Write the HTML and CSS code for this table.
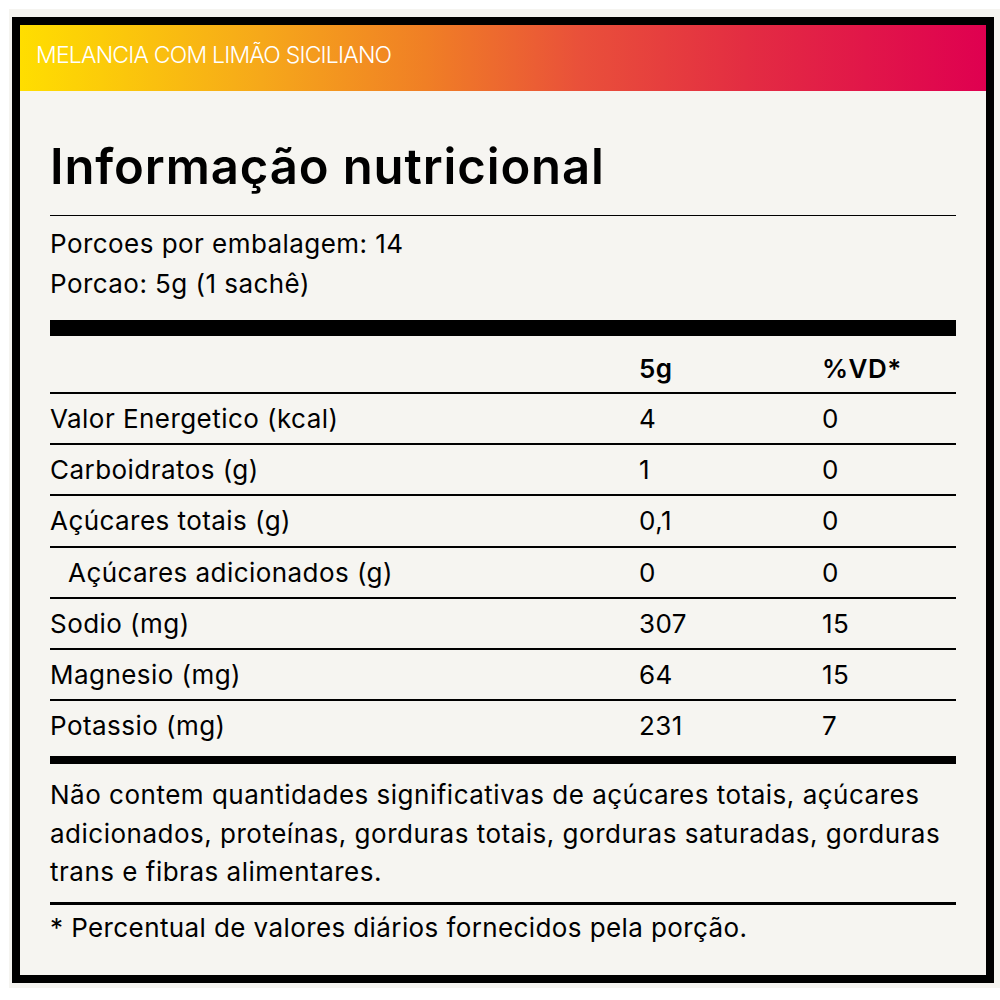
FILE: index.html
```html
<!DOCTYPE html>
<html lang="pt-BR">
<head>
<meta charset="utf-8">
<title>Informação nutricional</title>
<link rel="stylesheet" href="styles.css">
</head>
<body>
<div class="frame">
  <section class="label">
    <header class="flavor"><span class="flavor-name">MELANCIA COM LIMÃO SICILIANO</span></header>
    <div class="content">
      <h1 class="title">Informação nutricional</h1>
      <div class="serving">
        <p>Porcoes por embalagem: 14</p>
        <p>Porcao: 5g (1 sachê)</p>
      </div>
      <div class="bar-thick"></div>
      <div class="table">
        <div class="row head"><span></span><span>5g</span><span>%VD*</span></div>
        <div class="row"><span>Valor Energetico (kcal)</span><span>4</span><span>0</span></div>
        <div class="row"><span>Carboidratos (g)</span><span>1</span><span>0</span></div>
        <div class="row"><span>Açúcares totais (g)</span><span>0,1</span><span>0</span></div>
        <div class="row"><span class="indent">Açúcares adicionados (g)</span><span>0</span><span>0</span></div>
        <div class="row"><span>Sodio (mg)</span><span>307</span><span>15</span></div>
        <div class="row"><span>Magnesio (mg)</span><span>64</span><span>15</span></div>
        <div class="row"><span>Potassio (mg)</span><span>231</span><span>7</span></div>
      </div>
      <div class="bar-mid"></div>
      <p class="note">Não contem quantidades significativas de açúcares totais, açúcares adicionados, proteínas, gorduras totais, gorduras saturadas, gorduras trans e fibras alimentares.</p>
      <p class="foot">* Percentual de valores diários fornecidos pela porção.</p>
    </div>
  </section>
</div>
</body>
</html>
```
FILE: styles.css
```css
html, body {
  margin: 0;
  padding: 0;
  background: #ffffff;
}
body {
  font-family: Inter, "Liberation Sans", sans-serif;
  color: #000;
}
.frame {
  box-sizing: border-box;
  margin: 9px 0 0 9px;
  width: 991px;
  height: 979px;
  padding: 8px 5px 5px 3px;
  background: #f5f4f0;
}
.label {
  box-sizing: border-box;
  width: 982px;
  height: 966px;
  border: 8px solid #000;
  background: #f6f5f1;
}
.flavor {
  height: 66px;
  display: flex;
  align-items: center;
  padding: 0 0 6px 16px;
  box-sizing: border-box;
  background: linear-gradient(90deg, #ffde00 0%, #f6a81a 25%, #f07f25 42%, #e9503a 58%, #e32d42 75%, #df0050 100%);
}
.flavor-name {
  color: #fff;
  font-size: 23px;
  font-weight: 300;
  letter-spacing: -0.8px;
  line-height: 1;
}
.content {
  padding: 0 30px 0 30px;
}
.title {
  margin: 47px 0 0 0;
  font-size: 49px;
  font-weight: 600;
  line-height: 58px;
  letter-spacing: 0.9px;
  padding-bottom: 19px;
  border-bottom: 1px solid #000;
}
.serving {
  padding-top: 8px;
}
.serving p {
  margin: 0;
  font-size: 26px;
  line-height: 40px;
  letter-spacing: 0.45px;
}
.bar-thick {
  margin-top: 16px;
  height: 16px;
  background: #000;
}
.row {
  display: grid;
  grid-template-columns: 589px 183px 1fr;
  font-size: 26px;
  line-height: 39.2px;
  letter-spacing: 0.45px;
  padding: 5px 0;
  border-top: 2px solid #000;
}
.row.head {
  border-top: none;
  height: 56px;
  box-sizing: border-box;
  align-items: end;
  padding: 0 0 4px 0;
  font-weight: 600;
}
.indent {
  padding-left: 18px;
}
.bar-mid {
  margin-top: 6px;
  height: 8px;
  background: #000;
}
.note {
  margin: 0;
  padding: 12px 0 10px;
  font-size: 26px;
  line-height: 38.5px;
  letter-spacing: 0.5px;
  border-bottom: 3px solid #000;
}
.foot {
  margin: 0;
  padding-top: 4px;
  font-size: 26px;
  line-height: 38px;
  letter-spacing: 0.4px;
}
```
